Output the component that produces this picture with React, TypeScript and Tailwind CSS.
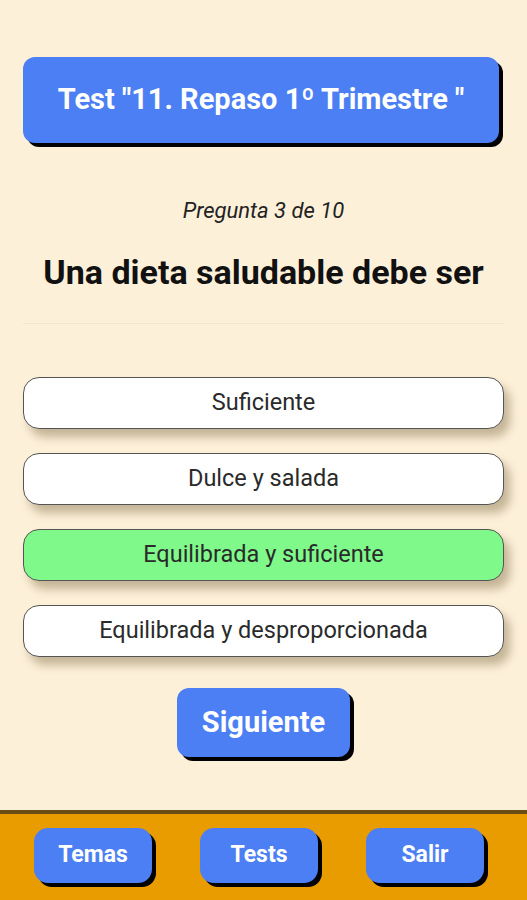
const options = [
  { text: "Suficiente", correct: false },
  { text: "Dulce y salada", correct: false },
  { text: "Equilibrada y suficiente", correct: true },
  { text: "Equilibrada y desproporcionada", correct: false },
];

const navButtons = ["Temas", "Tests", "Salir"];

export default function App() {
  return (
    <div
      className="w-[527px] h-[900px] bg-[#fdf0d9] flex flex-col"
      style={{ fontFamily: "Roboto, 'Liberation Sans', sans-serif" }}
    >
      <div className="flex-1 flex flex-col px-[23px]">
        {/* Title */}
        <div className="mt-[57px] w-[476px] h-[86px] rounded-[12px] bg-[#4c7ff4] shadow-[4px_4px_0_#000] flex items-center justify-center">
          <h1 className="text-white font-bold text-[29px] whitespace-nowrap">
            Test "11. Repaso 1º Trimestre "
          </h1>
        </div>

        <p className="mt-[54px] text-center italic text-[22px] text-[#222] leading-[28px]">
          Pregunta 3 de 10
        </p>
        <h2 className="mt-[25px] text-center font-bold text-[34px] text-[#111] leading-[44px] whitespace-nowrap">
          Una dieta saludable debe ser
        </h2>
        <div className="mt-[29px] h-px bg-[#f1e5cf]" />

        {/* Options */}
        <div className="mt-[53px] flex flex-col gap-[24px]">
          {options.map((opt) => (
            <button
              key={opt.text}
              className={`h-[52px] w-full rounded-[16px] border border-[#555] text-[23.5px] text-[#2a2a2a] shadow-[6px_8px_10px_rgba(110,90,50,0.4)] ${
                opt.correct ? "bg-[#80f98b]" : "bg-white"
              }`}
            >
              {opt.text}
            </button>
          ))}
        </div>

        <div className="mt-[31px] flex justify-center">
          <button className="w-[173px] h-[69px] rounded-[12px] bg-[#4c7ff4] shadow-[4px_4px_0_#000] text-white font-bold text-[29px]">
            Siguiente
          </button>
        </div>
      </div>

      {/* Bottom bar */}
      <div className="h-[90px] border-t-[4px] border-[#6b4c12] bg-[#e89c00] flex items-start justify-between pl-[34px] pr-[43px] pt-[14px]">
        {navButtons.map((label) => (
          <button
            key={label}
            className="w-[118px] h-[55px] rounded-[14px] bg-[#4c7ff4] shadow-[4px_4px_0_#000] text-white font-bold text-[23px]"
          >
            {label}
          </button>
        ))}
      </div>
    </div>
  );
}
